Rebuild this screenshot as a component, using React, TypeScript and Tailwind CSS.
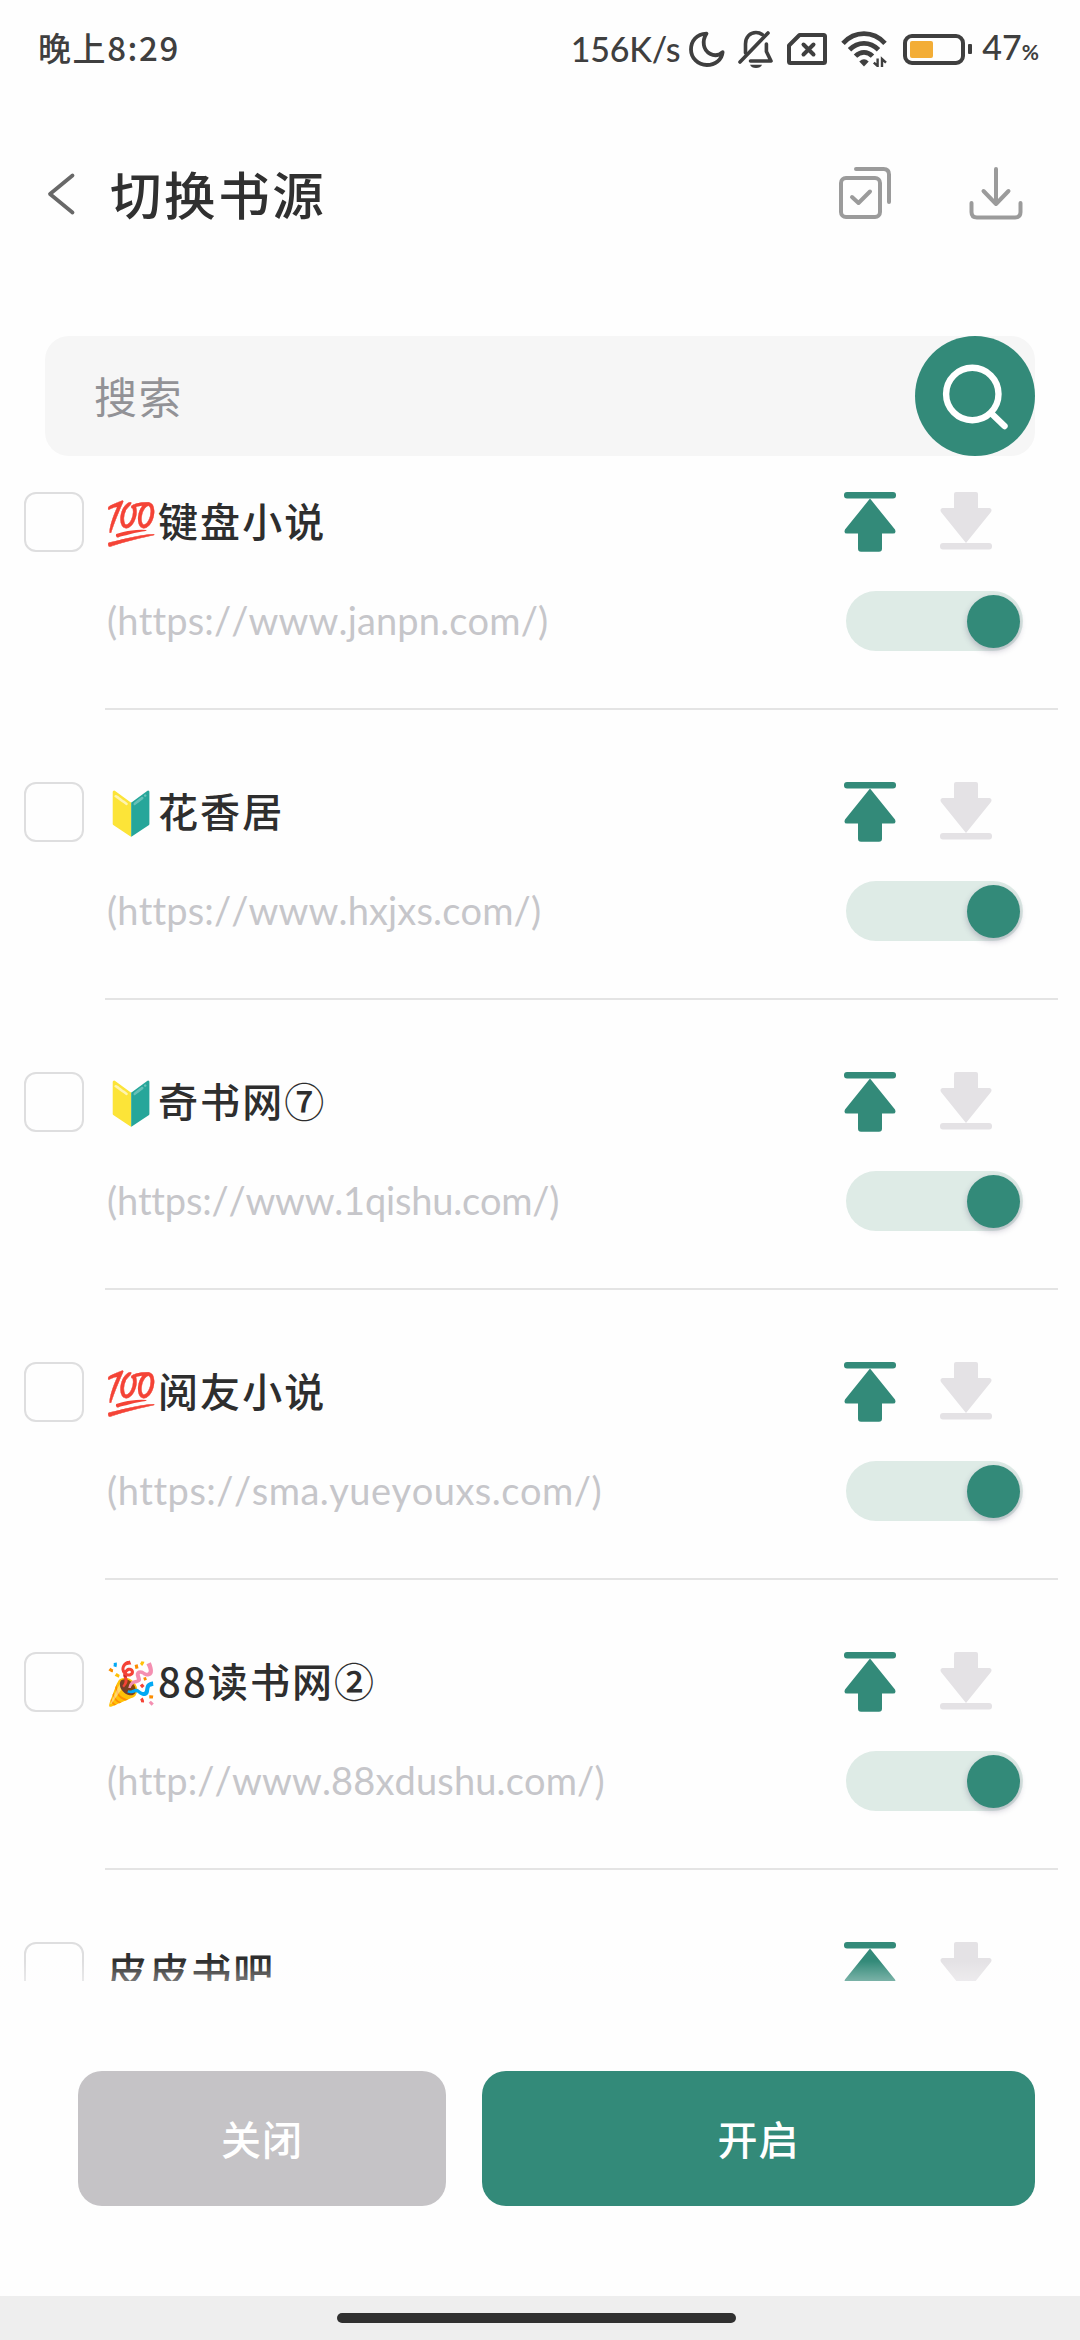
import { useState } from "react";

type Source = {
  emoji?: string;
  name: string;
  url?: string;
  tracking?: string;
};

const SOURCES: Source[] = [
  { emoji: "💯", name: "键盘小说", url: "(https://www.janpn.com/)", tracking: "tracking-[0.15px]" },
  { emoji: "🔰", name: "花香居", url: "(https://www.hxjxs.com/)", tracking: "tracking-[0.15px]" },
  { emoji: "🔰", name: "奇书网⑦", url: "(https://www.1qishu.com/)", tracking: "tracking-[-0.2px]" },
  { emoji: "💯", name: "阅友小说", url: "(https://sma.yueyouxs.com/)", tracking: "tracking-[0.5px]" },
  { emoji: "🎉", name: "88读书网②", url: "(http://www.88xdushu.com/)", tracking: "tracking-[0.15px]" },
  { name: "皮皮书吧" },
];

function StatusBar() {
  return (
    <div className="flex h-[98px] items-center justify-between pl-[38px] pr-[41px] text-[#3f3f3f]">
      <span className="mb-[3px] text-[33px] font-medium tracking-[1.6px]">晚上8:29</span>
      <div className="flex items-center font-['Lato','Noto_Sans_CJK_SC',sans-serif]">
        <span className="mr-[9px] text-[34px] font-medium leading-[40px] tracking-[-0.2px]">156K/s</span>
        <svg className="mr-[13px] h-[36px] w-[36px]" viewBox="0 0 36 36" fill="none" stroke="currentColor" strokeWidth="3.8" strokeLinejoin="round">
          <path d="M17.5 2.6C7.5 3 2 10 2 18.5C2 27 9 34 17.8 34C26 34 33 29 33.6 21.2C30 24.5 25.5 25.2 21 22.8C14 19 12.8 10 17.5 2.6Z" />
        </svg>
        <svg className="mr-[13px] h-[38px] w-[36px]" viewBox="0 0 36 38" fill="none" stroke="currentColor" strokeWidth="3.6" strokeLinecap="round" strokeLinejoin="round">
          <path d="M2 32L30 3" />
          <path d="M7.5 23V14C7.5 7 12 2.5 18 2.5C20.5 2.5 22.5 3.2 24.2 4.5" />
          <path d="M28.4 14V21.5L33 31H12.5" />
          <path d="M12 34.8H24C23 37 21 38 18 38C15 38 13 37 12 34.8Z" fill="currentColor" stroke="none" />
        </svg>
        <svg className="mr-[14px] h-[32px] w-[40px]" viewBox="0 0 40 32" fill="none" stroke="currentColor" strokeWidth="4" strokeLinejoin="round">
          <path d="M12.5 2H36.5Q38 2 38 3.5V28.5Q38 30 36.5 30H3.5Q2 30 2 28.5V12.5Z" />
          <path d="M16.5 11.5L26.5 21.5M26.5 11.5L16.5 21.5" strokeLinecap="round" />
        </svg>
        <svg className="mr-[16px] h-[36px] w-[46px]" viewBox="0 0 46 36" fill="none" stroke="currentColor" strokeWidth="4.8">
          <path d="M2 12.3C14 -0.5 32 -0.5 44 12.3" />
          <path d="M8.5 18.8C17 10.3 29 10.3 37.5 18.8" />
          <path d="M14.5 25.2C19.5 20 26.5 20 31.5 25.2" />
          <path d="M18.3 30.4Q23 26.2 27.7 30.4L23 35.4Z" fill="currentColor" stroke="none" />
          <path d="M36.6 27.5V35L32.8 31.6M41 36V28L45 31.6" strokeWidth="2.4" />
        </svg>
        <div className="mr-[3px] h-[31px] w-[62px] rounded-[9px] border-4 border-[#3f3f3f] p-[3px]">
          <div className="h-[17px] w-[23px] rounded-[2px] bg-[#f3ad36]" />
        </div>
        <div className="mr-[10px] h-[10px] w-[4px] rounded-[1px] bg-[#3f3f3f]" />
        <div className="flex items-baseline font-medium leading-[40px]">
          <span className="text-[34px]">47</span>
          <span className="text-[21px] font-bold">%</span>
        </div>
      </div>
    </div>
  );
}

function Header() {
  return (
    <header className="flex h-[194px] items-center pl-[46px] pr-[56px]">
      <svg className="mb-[2px] h-[44px] w-[30px]" viewBox="0 0 30 44" fill="none" stroke="#686868" strokeWidth="3.8" strokeLinecap="round" strokeLinejoin="round">
        <path d="M26.5 3.5L4 22L26.5 40.5" />
      </svg>
      <h1 className="mb-[4px] ml-[34px] flex-1 text-[51.5px] font-medium leading-none tracking-[2.6px] text-[#303030]">切换书源</h1>
      <svg className="mb-[2px] h-[54px] w-[54px]" viewBox="0 0 54 54" fill="none" stroke="#9b9b9b" strokeWidth="4" strokeLinecap="round" strokeLinejoin="round">
        <rect x="4" y="11" width="39" height="39" rx="5" />
        <path d="M19 2H46.5Q52 2 52 7.5V35" />
        <path d="M15 30L21.5 36L33 24.5" />
      </svg>
      <svg className="mb-[2px] ml-[77px] h-[54px] w-[56px]" viewBox="0 0 56 54" fill="none" stroke="#9b9b9b" strokeWidth="4" strokeLinecap="round" strokeLinejoin="round">
        <path d="M28 2V37M15.5 24L28 37L40.5 24" />
        <path d="M3.5 36V45Q3.5 50.5 9 50.5H47Q52.5 50.5 52.5 45V36" />
      </svg>
    </header>
  );
}

function SearchBar() {
  return (
    <div className="mx-[45px] mt-[44px] flex h-[120px] items-center justify-between rounded-[24px] bg-[#f6f6f6] pl-[49px]">
      <span className="mb-[2px] text-[43px] tracking-[1.5px] text-[#929296]">搜索</span>
      <button className="flex size-[120px] items-center justify-center rounded-full bg-[#338a79]">
        <svg className="size-[120px]" viewBox="0 0 120 120" fill="none" stroke="#fff" strokeWidth="6.4" strokeLinecap="round">
          <circle cx="57.3" cy="58" r="26.2" />
          <path d="M77 78L89.5 90" />
        </svg>
      </button>
    </div>
  );
}

function MoveTopIcon() {
  return (
    <svg className="h-[60px] w-[52px]" viewBox="0 0 52 60" fill="#338a79">
      <rect x="0" y="0" width="52" height="6.6" rx="3" />
      <path d="M26 6.6L51 37.5Q52.6 41.6 49 41.6H38V56.5Q38 59.7 35 59.7H17Q14 59.7 14 56.5V41.6H3Q-0.6 41.6 1 37.5Z" />
    </svg>
  );
}

function MoveBottomIcon() {
  return (
    <svg className="h-[60px] w-[52px]" viewBox="0 0 52 60" fill="#e4e2e5">
      <path d="M16 0H36Q38 0 38 2V16H49.5Q52.5 16.5 51 20L26 51L1 20Q-0.5 16.5 2.5 16H14V2Q14 0 16 0Z" />
      <rect x="0" y="51" width="52" height="6.6" rx="3" />
    </svg>
  );
}

function SourceRow({ source }: { source: Source }) {
  const [enabled, setEnabled] = useState(true);

  return (
    <li className="flex h-[218px] shrink-0 pl-[24px] pr-[22px]">
      <div className="size-[60px] rounded-[12px] border-2 border-[#dededf]" />
      <div className="ml-[21px] flex flex-1 justify-between border-b-2 border-[#e4e4e4] pr-[35px]">
        <div className="pl-[2px]">
          <div className="flex h-[55px] items-center whitespace-nowrap text-[40px] font-medium leading-[60px] tracking-[2.1px] text-[#2e2e2e]">
            {source.emoji ? <span className="-ml-[2px] w-[53px] text-[42px] tracking-normal">{source.emoji}</span> : null}
            <span>{source.name}</span>
          </div>
          {source.url ? (
            <div
              className={`mt-[43px] flex h-[60px] items-center whitespace-nowrap font-['Lato','Noto_Sans_CJK_SC',sans-serif] text-[38px] text-[#c6c6ca] [font-kerning:none] ${source.tracking}`}
            >
              {source.url}
            </div>
          ) : null}
        </div>
        <div className="w-[179px]">
          <div className="flex gap-[44px]">
            <MoveTopIcon />
            <MoveBottomIcon />
          </div>
          <button
            className="ml-[2px] mt-[39px] flex h-[60px] w-[177px] items-center justify-end rounded-full bg-[#deebe6] pr-[3px]"
            onClick={() => setEnabled(!enabled)}
          >
            <span className="size-[53px] rounded-full bg-[#338a79] shadow-[0_3px_6px_rgba(60,50,90,0.28)]" />
          </button>
        </div>
      </div>
    </li>
  );
}

export default function App() {
  return (
    <div className="flex h-[2340px] w-[1080px] flex-col overflow-hidden bg-[#fefefe] font-['Noto_Sans_CJK_SC',sans-serif]">
      <StatusBar />
      <Header />
      <SearchBar />
      <div className="relative mt-[36px] h-[1489px] overflow-hidden">
        <ul className="flex flex-col gap-[72px]">
          {SOURCES.map((source) => (
            <SourceRow key={source.name} source={source} />
          ))}
        </ul>
        {/* rows fade out just above the action buttons */}
        <div className="absolute inset-x-0 bottom-0 h-[20px] bg-linear-to-b from-[#fefefe]/0 to-[#fefcfd]/35" />
      </div>
      <div className="mt-[90px] flex h-[135px] gap-[36px] pl-[78px] pr-[45px] text-[40px] font-medium tracking-[1px] text-white">
        <button className="w-[368px] rounded-[24px] bg-[#c5c3c6] pb-[2px]">关闭</button>
        <button className="flex-1 rounded-[24px] bg-[#338a79] pb-[2px]">开启</button>
      </div>
      <div className="mt-auto flex h-[44px] justify-center bg-[#eeeeee] pt-[17px]">
        <div className="-ml-[8px] h-[10px] w-[399px] rounded-full bg-[#303030]" />
      </div>
    </div>
  );
}
